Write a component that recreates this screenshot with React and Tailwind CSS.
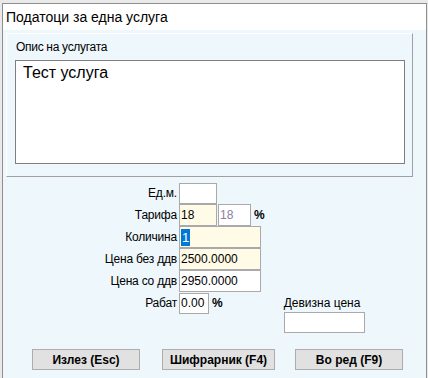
export default function App() {
  const font = { fontFamily: '"Liberation Sans", Arial, sans-serif' };
  const rows = [
    { label: "Ед.м.", kind: "edm" },
    { label: "Тарифа", kind: "tarifa" },
    { label: "Количина", kind: "kol" },
    { label: "Цена без ддв", kind: "bez" },
    { label: "Цена со ддв", kind: "so" },
    { label: "Рабат", kind: "rabat" },
  ];
  const renderInput = (kind) => {
    switch (kind) {
      case "edm":
        return <div className="w-[38px] h-[21px] bg-white border border-[#a9a9a9]" />;
      case "tarifa":
        return (
          <div className="flex items-center">
            <div className="w-[38px] h-[22px] bg-[#fffbe6] border border-[#a9a9a9] pl-[1px] leading-[20px] text-[12px] text-black">18</div>
            <div className="w-[33px] h-[22px] ml-[1px] bg-white border border-[#a9a9a9] pl-[1px] leading-[20px] text-[12px] text-[#8a7f9c]">18</div>
            <span className="ml-[3px] text-[12px] font-bold text-black">%</span>
          </div>
        );
      case "kol":
        return (
          <div className="w-[82px] h-[22px] bg-[#fffbe6] border border-[#a9a9a9] pl-[1px] flex items-center">
            <span className="bg-[#0078d7] text-white text-[13px] leading-[17px] px-[1px]">1</span>
          </div>
        );
      case "bez":
        return <div className="w-[82px] h-[22px] bg-[#fffbe6] border border-[#a9a9a9] pl-[1px] leading-[20px] text-[12px] text-black">2500.0000</div>;
      case "so":
        return <div className="w-[82px] h-[22px] bg-white border border-[#a9a9a9] pl-[1px] leading-[20px] text-[12px] text-black">2950.0000</div>;
      case "rabat":
        return (
          <div className="flex items-center">
            <div className="w-[30px] h-[21px] bg-white border border-[#a9a9a9] pl-[1px] leading-[19px] text-[12px] text-black">0.00</div>
            <span className="ml-[3px] text-[12px] font-bold text-black">%</span>
          </div>
        );
      default:
        return null;
    }
  };
  return (
    <div className="w-[428px] h-[378px] bg-[#e9e9e9] pt-[3px] pl-[2px] pr-[1px] overflow-hidden" style={font}>
      <div className="h-full border-l border-t border-r border-[#8e8e8e] flex flex-col">
        <div className="h-[26px] bg-white flex items-center pl-[3px] text-[14px] text-black">Податоци за една услуга</div>
        <div className="flex-1 bg-[#eef7fc] pt-[3px] pl-[3px]">
          <div className="w-[407px] h-[144px] border-t border-l border-white border-r border-b border-r-[#a0a0a0] border-b-[#a0a0a0] pt-[6px] pl-[9px]">
            <div className="text-[12px] leading-[14px] tracking-[-0.3px] text-black">Опис на услугата</div>
            <div className="mt-[6px] ml-[-1px] w-[390px] h-[104px] bg-white border border-[#7f7f7f] pl-[7px] pt-[2px] text-[16px] leading-[20px] text-black">Тест услуга</div>
          </div>
          <div className="flex mt-[5px]">
            <div className="flex flex-col">
              {rows.map((r) => (
                <div key={r.label} className="flex items-center h-[22px]">
                  <div className="w-[173px] text-right pr-[2px] text-[12px] tracking-[-0.2px] text-black">{r.label}</div>
                  {renderInput(r.kind)}
                </div>
              ))}
            </div>
            <div className="ml-[19px] pt-[113px] flex flex-col">
              <div className="text-[12px] leading-[16px] text-black">Девизна цена</div>
              <div className="mt-[1px] w-[81px] h-[21px] bg-white border border-[#a9a9a9]" />
            </div>
          </div>
          <div className="flex mt-[16px] pl-[26px]">
            <button className="w-[108px] h-[21px] bg-[#e1e1e1] border border-[#adadad] text-[12px] font-bold text-black">Излез (Esc)</button>
            <button className="ml-[22px] w-[113px] h-[21px] bg-[#e1e1e1] border border-[#adadad] text-[12px] font-bold text-black">Шифрарник (F4)</button>
            <button className="ml-[20px] w-[108px] h-[21px] bg-[#e1e1e1] border border-[#adadad] text-[12px] font-bold text-black">Во ред (F9)</button>
          </div>
        </div>
      </div>
    </div>
  );
}
